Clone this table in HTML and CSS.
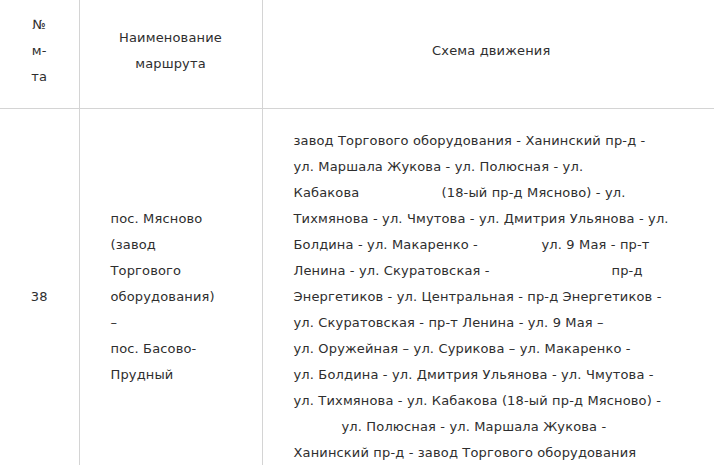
FILE: index.html
```html
<!DOCTYPE html>
<html lang="ru">
<head>
<meta charset="utf-8">
<title>Маршрут 38</title>
<link rel="stylesheet" href="styles.css">
</head>
<body>
<table class="routes">
  <colgroup>
    <col class="c-num">
    <col class="c-name">
    <col class="c-scheme">
  </colgroup>
  <thead>
    <tr>
      <th>№<br>м-<br>та</th>
      <th>Наименование<br>маршрута</th>
      <th>Схема движения</th>
    </tr>
  </thead>
  <tbody>
    <tr>
      <td class="num">38</td>
      <td class="name">пос. Мясново<br>(завод<br>Торгового<br>оборудования)<br>–<br>пос. Басово-<br>Прудный</td>
      <td class="scheme">завод Торгового оборудования - Ханинский пр-д -<br>ул. Маршала Жукова - ул. Полюсная - ул.<br><span class="tab t148">Кабакова</span>(18-ый пр-д Мясново) - ул.<br>Тихмянова - ул. Чмутова - ул. Дмитрия Ульянова - ул.<br><span class="tab t248">Болдина - ул. Макаренко -</span>ул. 9 Мая - пр-т<br><span class="tab t318">Ленина - ул. Скуратовская -</span>пр-д<br>Энергетиков - ул. Центральная - пр-д Энергетиков -<br>ул. Скуратовская - пр-т Ленина - ул. 9 Мая –<br>ул. Оружейная – ул. Сурикова – ул. Макаренко -<br>ул. Болдина - ул. Дмитрия Ульянова - ул. Чмутова -<br>ул. Тихмянова - ул. Кабакова (18-ый пр-д Мясново) -<br><span class="indent">ул. Полюсная - ул. Маршала Жукова -</span><br>Ханинский пр-д - завод Торгового оборудования</td>
    </tr>
  </tbody>
</table>
</body>
</html>
```

FILE: styles.css
```css
html, body {
  margin: 0;
  padding: 0;
  overflow: hidden;
  background: #fff;
}

body {
  font-family: "DejaVu Sans", sans-serif;
  font-size: 13px;
  line-height: 26px;
  letter-spacing: 0.15px;
  color: #2e2e2e;
}

.routes {
  border-collapse: collapse;
  table-layout: fixed;
  width: 720px;
}

.c-num { width: 79px; }
.c-name { width: 183px; }
.c-scheme { width: 458px; }

.routes th,
.routes td {
  padding: 19px 31px;
  vertical-align: middle;
  text-align: left;
  font-weight: normal;
  white-space: nowrap;
}

.routes th {
  padding-top: 12px;
  padding-bottom: 18px;
  text-align: center;
}

.routes th + th,
.routes td + td {
  border-left: 1px solid #d4d4d4;
}

.routes thead tr {
  border-bottom: 1px solid #d4d4d4;
}

.routes td.num {
  text-align: center;
  padding-left: 0;
  padding-right: 0;
}

.scheme {
  padding-left: 32px;
}

.tab {
  display: inline-block;
}

.t148 { width: 148px; }
.t248 { width: 248px; }
.t318 { width: 318px; }

.indent {
  padding-left: 48px;
}
```
